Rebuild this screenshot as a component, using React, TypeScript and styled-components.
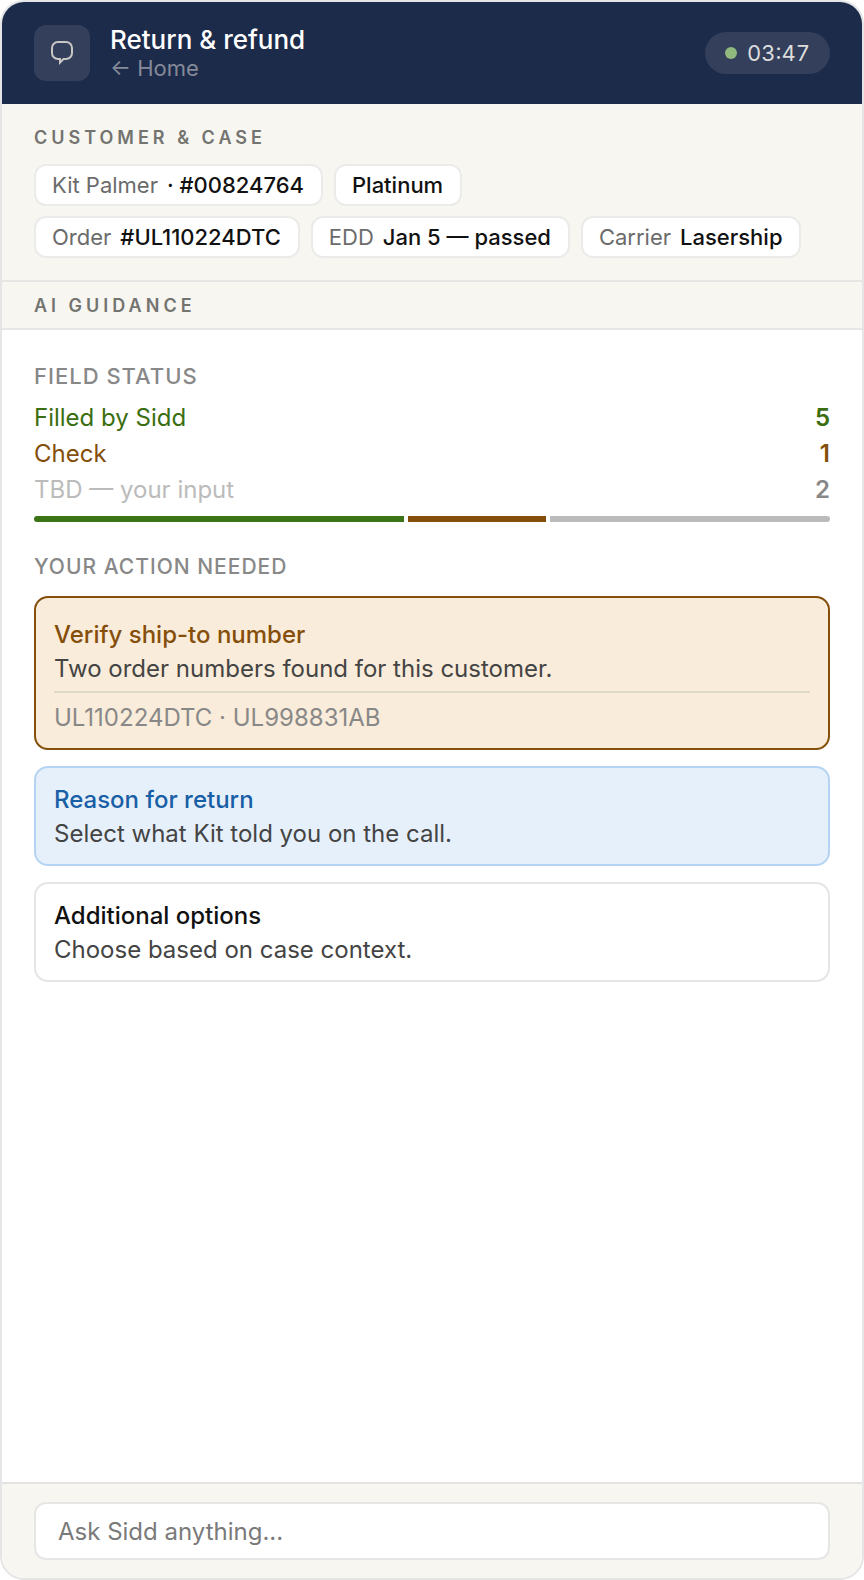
import React from "react";
import styled, { createGlobalStyle } from "styled-components";

const GlobalStyle = createGlobalStyle`
  *, *::before, *::after { box-sizing: border-box; }
  body {
    margin: 0;
    background: #ffffff;
    font-family: Inter, "Liberation Sans", sans-serif;
    color: #111111;
  }
  h1, h2, h3, p, ul, dl, dd { margin: 0; padding: 0; }
`;

const Panel = styled.main`
  display: flex;
  flex-direction: column;
  min-height: 100vh;
  border: 2px solid #e5e5e5;
  border-radius: 24px;
  background: #ffffff;
  overflow: hidden;
`;

const Header = styled.header`
  display: flex;
  align-items: center;
  gap: 20px;
  padding: 16px 32px;
  min-height: 102px;
  background: #1c2b4a;
`;

const LogoTile = styled.div`
  display: flex;
  align-items: center;
  justify-content: center;
  width: 56px;
  height: 56px;
  border-radius: 12px;
  background: #333f5b;
`;

const HeaderText = styled.div`
  display: flex;
  flex-direction: column;
  align-items: flex-start;
  flex: 1;
`;

const Title = styled.h1`
  font-size: 26px;
  font-weight: 500;
  line-height: 30px;
  color: #ffffff;
`;

const HomeLink = styled.a`
  font-size: 22px;
  line-height: 26px;
  color: #848a98;
  text-decoration: none;
`;

const Timer = styled.div`
  display: flex;
  align-items: center;
  gap: 10px;
  height: 42px;
  padding: 0 20px;
  border-radius: 21px;
  background: #333f5b;
  font-size: 22px;
  font-variant-numeric: tabular-nums;
  color: #dddddd;
`;

const Dot = styled.span`
  width: 12px;
  height: 12px;
  border-radius: 50%;
  background: #90b97e;
`;

const CaseSection = styled.section`
  display: flex;
  flex-direction: column;
  gap: 15px;
  padding: 23px 32px 22px;
  border-bottom: 2px solid #e6e6e4;
  background: #f7f6f1;
`;

const BandTitle = styled.h2`
  font-size: 18px;
  font-weight: 600;
  line-height: 22px;
  letter-spacing: 4px;
  text-transform: uppercase;
  color: #737370;
`;

const Chips = styled.ul`
  display: flex;
  flex-direction: column;
  gap: 10px;
  list-style: none;
`;

const ChipRow = styled.li`
  display: flex;
  flex-wrap: wrap;
  gap: 11px;
`;

const Chip = styled.span`
  display: flex;
  align-items: center;
  gap: 9px;
  height: 42px;
  padding: 0 17px 0 16px;
  border: 2px solid #ebebea;
  border-radius: 12px;
  background: #ffffff;
  font-size: 22px;
  white-space: nowrap;
`;

const ChipLabel = styled.span`
  color: #6b6b6b;
`;

const ChipValue = styled.strong`
  font-weight: 500;
`;

const GuidanceBand = styled.div`
  padding: 13px 32px 11px;
  border-bottom: 2px solid #e6e6e4;
  background: #f7f6f1;
`;

const Guidance = styled.div`
  flex: 1;
  padding: 32px;
`;

const GroupTitle = styled.h3<{ $size: number }>`
  font-size: ${(p) => p.$size}px;
  font-weight: 500;
  line-height: 28px;
  letter-spacing: 1px;
  text-transform: uppercase;
  color: #888888;
`;

const StatusList = styled.dl`
  margin: 10px 0 8px;
`;

const StatusRow = styled.div<{ $color: string }>`
  display: flex;
  justify-content: space-between;
  font-size: 24px;
  line-height: 36px;
  color: ${(p) => p.$color};
`;

const StatusCount = styled.dd<{ $color: string }>`
  font-weight: 600;
  color: ${(p) => p.$color};
`;

const Progress = styled.div`
  display: flex;
  gap: 4px;
  height: 6px;
  margin-bottom: 31px;
  border-radius: 3px;
  overflow: hidden;
`;

const Segment = styled.span<{ $share: number; $color: string }>`
  flex: ${(p) => p.$share};
  background: ${(p) => p.$color};
`;

const Cards = styled.div`
  display: flex;
  flex-direction: column;
  gap: 16px;
  margin-top: 15px;
`;

const Card = styled.article<{ $border: string; $fill: string; $roomy?: boolean }>`
  padding: ${(p) => (p.$roomy ? "20px 18px 13px" : "15px 18px 13px")};
  border: 2px solid ${(p) => p.$border};
  border-radius: 14px;
  background: ${(p) => p.$fill};
  font-size: 24px;
  line-height: 34px;
`;

const CardTitle = styled.h3<{ $color: string }>`
  font-size: 24px;
  font-weight: 500;
  color: ${(p) => p.$color};
`;

const CardText = styled.p`
  color: #444444;
`;

const CardNote = styled.p`
  margin-top: 5px;
  padding-top: 8px;
  border-top: 2px solid #dfd7c8;
  color: #888888;
`;

const Footer = styled.footer`
  padding: 18px 32px;
  border-top: 2px solid #e3e3e1;
  background: #f7f6f1;
`;

const AskInput = styled.input`
  display: block;
  width: 100%;
  height: 58px;
  padding: 0 22px;
  border: 2px solid #e6e6e4;
  border-radius: 12px;
  background: #ffffff;
  font: inherit;
  font-size: 24px;
  color: #111111;
  &::placeholder { color: #7a7a7a; opacity: 1; }
`;

const caseRows = [
  [
    { label: "Kit Palmer", value: "· #00824764" },
    { label: "", value: "Platinum" },
  ],
  [
    { label: "Order", value: "#UL110224DTC" },
    { label: "EDD", value: "Jan 5 — passed" },
    { label: "Carrier", value: "Lasership" },
  ],
];

const statuses = [
  { label: "Filled by Sidd", count: 5, text: "#3b6d11", number: "#3b6d11", bar: "#3b7317", share: 370 },
  { label: "Check", count: 1, text: "#854f0b", number: "#854f0b", bar: "#854f0b", share: 138 },
  { label: "TBD — your input", count: 2, text: "#bbbbbb", number: "#888888", bar: "#bbbbbb", share: 280 },
];

export default function App() {
  return (
    <>
      <GlobalStyle />
      <Panel>
        <Header>
          <LogoTile>
            <svg width="24" height="26" viewBox="0 0 24 26" fill="none" stroke="#c8c7c3" strokeWidth="2" aria-hidden="true">
              <path d="M8 2h8a6 6 0 0 1 6 6v5a6 6 0 0 1-6 6h-2.500l-3.500 3.500V19H8a6 6 0 0 1-6-6V8a6 6 0 0 1 6-6z" />
            </svg>
          </LogoTile>
          <HeaderText>
            <Title>Return &amp; refund</Title>
            <HomeLink href="#home">← Home</HomeLink>
          </HeaderText>
          <Timer>
            <Dot />
            <time>03:47</time>
          </Timer>
        </Header>
        <CaseSection>
          <BandTitle>Customer &amp; case</BandTitle>
          <Chips>
            {caseRows.map((row, i) => (
              <ChipRow key={i}>
                {row.map((chip) => (
                  <Chip key={chip.value}>
                    {chip.label && <ChipLabel>{chip.label}</ChipLabel>}
                    <ChipValue>{chip.value}</ChipValue>
                  </Chip>
                ))}
              </ChipRow>
            ))}
          </Chips>
        </CaseSection>
        <GuidanceBand>
          <BandTitle>AI guidance</BandTitle>
        </GuidanceBand>
        <Guidance>
          <GroupTitle $size={22}>Field status</GroupTitle>
          <StatusList>
            {statuses.map((s) => (
              <StatusRow key={s.label} $color={s.text}>
                <dt>{s.label}</dt>
                <StatusCount $color={s.number}>{s.count}</StatusCount>
              </StatusRow>
            ))}
          </StatusList>
          <Progress>
            {statuses.map((s) => (
              <Segment key={s.label} $share={s.share} $color={s.bar} />
            ))}
          </Progress>
          <GroupTitle $size={21}>Your action needed</GroupTitle>
          <Cards>
            <Card $border="#854f0b" $fill="#faecda" $roomy>
              <CardTitle $color="#854f0b">Verify ship-to number</CardTitle>
              <CardText>Two order numbers found for this customer.</CardText>
              <CardNote>UL110224DTC · UL998831AB</CardNote>
            </Card>
            <Card $border="#b5d4f4" $fill="#e6f0fb">
              <CardTitle $color="#185fa5">Reason for return</CardTitle>
              <CardText>Select what Kit told you on the call.</CardText>
            </Card>
            <Card $border="#e5e5e5" $fill="#ffffff">
              <CardTitle $color="#111111">Additional options</CardTitle>
              <CardText>Choose based on case context.</CardText>
            </Card>
          </Cards>
        </Guidance>
        <Footer>
          <AskInput type="text" aria-label="Ask Sidd anything" placeholder="Ask Sidd anything..." />
        </Footer>
      </Panel>
    </>
  );
}
